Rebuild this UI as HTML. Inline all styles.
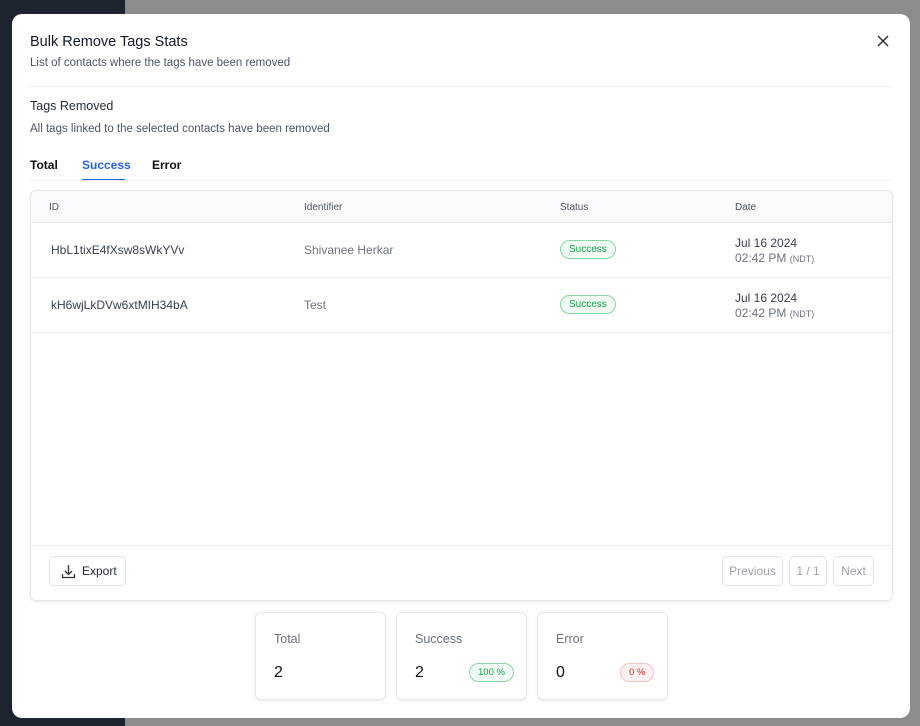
<!DOCTYPE html>
<html><head><style>
*{box-sizing:border-box;margin:0;padding:0}
body{width:920px;height:726px;overflow:hidden;background:#8c8c8c;font-family:"Liberation Sans",sans-serif;position:relative}
.side{position:absolute;left:0;top:0;width:125px;height:726px;background:#1e2330}
.modal{position:absolute;left:12px;top:14px;width:898px;height:704px;background:#fff;border-radius:10px}
.t{position:absolute;white-space:nowrap}
.tbl{position:absolute;left:18px;top:176px;width:863px;height:411px;border:1px solid #e5e7eb;border-radius:6px;box-shadow:0 1px 3px rgba(0,0,0,.08);overflow:hidden}
.hdr{height:32px;background:#f9fafb;border-bottom:1px solid #e5e7eb;position:relative;font-size:10px;color:#4b5563}
.row{height:55px;border-bottom:1px solid #eceef1;position:relative;font-size:12px;color:#374151}
.badge{position:absolute;border:1px solid #86d8a4;background:#f0fbf4;color:#16a34a;border-radius:10px;font-size:10px;padding:3px 8px}
.btn{position:absolute;border:1px solid #e0e2e6;border-radius:5px;font-size:12px;color:#9ca3af;text-align:center;line-height:28px;height:30px}
.card{position:absolute;top:598px;width:131px;height:88px;border:1px solid #e5e7eb;border-radius:6px;box-shadow:0 1px 3px rgba(0,0,0,.08)}
.card .l{position:absolute;left:18px;top:19px;font-size:12.5px;color:#6b7280}
.card .v{position:absolute;left:18px;top:51px;font-size:16px;color:#111}
</style></head><body>
<div class="side"></div>
<div class="modal">
<div class="t" style="left:18px;top:20px;font-size:14.5px;color:#111827">Bulk Remove Tags Stats</div>
<div class="t" style="left:18px;top:43px;font-size:11.5px;color:#4b5563">List of contacts where the tags have been removed</div>
<svg style="position:absolute;left:865px;top:21px" width="12" height="12" viewBox="0 0 12 12"><path d="M1 1L11 11M11 1L1 11" stroke="#333" stroke-width="1.5"/></svg>
<div style="position:absolute;left:18px;top:72px;width:863px;border-top:1px solid #eef0f2"></div>
<div class="t" style="left:18px;top:85px;font-size:12.5px;color:#1f2937">Tags Removed</div>
<div class="t" style="left:18px;top:109px;font-size:11.5px;color:#4b5563">All tags linked to the selected contacts have been removed</div>
<div class="t" style="left:18px;top:144px;font-size:12px;color:#111;font-weight:bold">Total</div>
<div class="t" style="left:70px;top:144px;font-size:12px;color:#2563eb;font-weight:bold">Success</div>
<div style="position:absolute;left:70px;top:165px;width:43px;height:2px;background:#2563eb"></div>
<div class="t" style="left:140px;top:144px;font-size:12px;color:#111;font-weight:bold">Error</div>
<div style="position:absolute;left:18px;top:166px;width:863px;border-top:1px solid #eef0f2"></div>
<div class="tbl">
<div class="hdr"><span class="t" style="left:18px;top:11px">ID</span><span class="t" style="left:273px;top:11px">Identifier</span><span class="t" style="left:529px;top:11px">Status</span><span class="t" style="left:704px;top:11px">Date</span></div>
<div class="row"><span class="t" style="left:20px;top:20px">HbL1tixE4fXsw8sWkYVv</span><span class="t" style="left:273px;top:20px;color:#6b7280">Shivanee Herkar</span><span class="badge" style="left:529px;top:17px">Success</span><span class="t" style="left:704px;top:13px">Jul 16 2024</span><span class="t" style="left:704px;top:28px;color:#6b7280">02:42 PM <span style="font-size:9px">(NDT)</span></span></div>
<div class="row"><span class="t" style="left:20px;top:20px">kH6wjLkDVw6xtMIH34bA</span><span class="t" style="left:273px;top:20px;color:#6b7280">Test</span><span class="badge" style="left:529px;top:17px">Success</span><span class="t" style="left:704px;top:13px">Jul 16 2024</span><span class="t" style="left:704px;top:28px;color:#6b7280">02:42 PM <span style="font-size:9px">(NDT)</span></span></div>
<div style="position:absolute;left:0;top:354px;width:100%;border-top:1px solid #eceef1"></div>
<div class="btn" style="left:18px;top:365px;width:77px;color:#1f2937;text-align:left;padding-left:32px">Export
<svg style="position:absolute;left:11px;top:7px" width="15" height="15" viewBox="0 0 15 15"><path d="M7.5 1v9M4 7l3.5 3.5L11 7M1.5 10v3.5h12V10" stroke="#333" stroke-width="1.3" fill="none"/></svg></div>
<div class="btn" style="left:691px;top:365px;width:61px">Previous</div>
<div class="btn" style="left:758px;top:365px;width:38px">1 / 1</div>
<div class="btn" style="left:802px;top:365px;width:41px">Next</div>
</div>
<div class="card" style="left:243px"><span class="l">Total</span><span class="v">2</span></div>
<div class="card" style="left:384px"><span class="l">Success</span><span class="v">2</span><span class="badge" style="left:72px;top:50px;font-size:9.5px">100 %</span></div>
<div class="card" style="left:525px"><span class="l">Error</span><span class="v">0</span><span class="badge" style="left:82px;top:50px;font-size:9.5px;border-color:#f5c2c2;background:#fdf2f2;color:#dc2626">0 %</span></div>
</div>
</body></html>
